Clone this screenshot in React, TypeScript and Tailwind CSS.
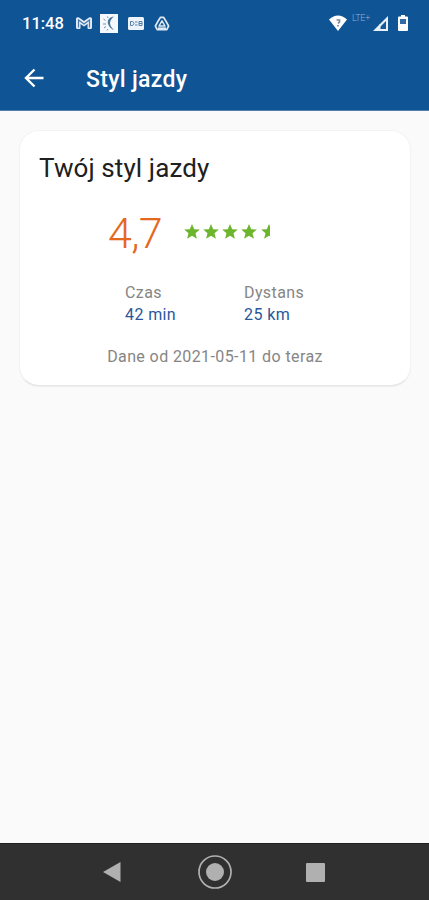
import type { ReactNode } from "react";

const STAR = "M8 0l2.200 5.200 5.600.4-4.300 3.600 1.400 5.500L8 11.700l-4.900 3 1.400-5.500L.2 5.600l5.600-.4z";

function Star({ half = false }: { half?: boolean }) {
  return (
    <svg viewBox={half ? "0 0 9 16" : "0 0 16 16"} className={half ? "h-4 w-[9px]" : "h-4 w-4"}>
      <path d={STAR} fill="#6cb52d" />
    </svg>
  );
}

function StatusBar() {
  return (
    <div className="flex h-[46px] items-center pl-[22px] pr-[21px] text-white">
      <span className="mt-0.5 w-[54px] text-[16.500px] font-medium leading-none">11:48</span>
      <svg viewBox="0 0 16 12" className="h-3 w-4" fill="none">
        <path d="M0 1.500Q1-.5 3 .5l5 3.500 5-3.500q2-1 3 1v9q0 1.500-1.500 1.500h-2q-1 0-1-1V7L8 9.500 4.500 7v4q0 1-1 1h-2Q0 12 0 10.500z" fill="#e4edf6" />
        <path d="M2.500 10.500V3L8 7l5.500-4v7.500" stroke="#4c7bac" strokeWidth="1.200" />
      </svg>
      <svg viewBox="0 0 18 19" className="ml-2 h-[19px] w-[18px]">
        <path d="M0 0h18v19H0z" fill="#f5f8fc" />
        <path d="M14 2.500C7.500 3.500 7 8 8.500 11c1 2.500 3 4 5.500 5-3-3-4-5-4-7s1.500-4.500 4-6.500z" fill="#43759f" />
        <path d="M3.500 5l2 1.500M3 10h3M4 14l2-1.500M7.500 2.500l.5 1.500M7 16.500l1-1.500" stroke="#6c91b4" />
      </svg>
      <svg viewBox="0 0 16 13" className="ml-2.5 h-[13px] w-4">
        <rect width="16" height="13" rx="1.500" fill="#edf3f9" />
        <path d="M2.500 4.500h2.200l1.300 2-1.300 2H2.500zM7 5h2.500M7 8h2.500M11 4.500h3v4h-3zM11 6.500h3" fill="none" stroke="#517fac" />
      </svg>
      <svg viewBox="0 0 16 15" className="ml-2.5 h-[15px] w-4" fill="none" stroke="#dfe9f3">
        <path d="M6.500 1.300h3Q12 5 14.600 10l-1.800 3.600H3.200L1.400 10Q4 5 6.500 1.300z" strokeWidth="1.700" strokeLinejoin="round" />
        <path d="M8 4.800L5 10h6z" strokeWidth="1.500" strokeLinejoin="round" />
        <path d="M4 12.200h8" strokeWidth="1.700" />
      </svg>
      <div className="ml-auto flex items-center">
        <svg viewBox="0 0 18 16" className="mr-px h-4 w-[18px]">
          <path d="M0 4.500Q9-3.500 18 4.500L9 16z" fill="#fff" />
          <path d="M7.500 5h3v1.800L9 8.300M9 10v1.500" fill="none" stroke="#7e8a96" strokeWidth="1.700" />
        </svg>
        <span className="-mt-2.5 ml-1 w-[19px] text-[9px] font-light leading-none tracking-[-0.300px] text-[#8fb2d5]">LTE+</span>
        <svg viewBox="0 0 15 15" className="ml-0.5 mr-[10px] h-[15px] w-[15px]">
          <path d="M0 15L15 0v15z" fill="#e9f0f8" />
          <path d="M7 11l6-6v8H7z" fill="#155998" />
          <path d="M7 8v5" stroke="#e9f0f8" strokeWidth="1" />
        </svg>
        <svg viewBox="0 0 10 16" className="h-4 w-2.5">
          <path d="M3 0h4v1.500h2q1 0 1 1V15q0 1-1 1H1q-1 0-1-1V2.500q0-1 1-1h2z" fill="#fff" />
          <path d="M2 4h6v5H2z" fill="#326ba4" />
        </svg>
      </div>
    </div>
  );
}

function Stat({ label, children }: { label: string; children: ReactNode }) {
  return (
    <div className="w-[119px] text-[16px] leading-[22px] tracking-[0.400px]">
      <div className="text-[#858585]">{label}</div>
      <div className="text-[#295797]">{children}</div>
    </div>
  );
}

export default function App() {
  return (
    <div className="flex h-[900px] w-[429px] flex-col overflow-hidden bg-[#fafafa] font-['Roboto',sans-serif]">
      <header className="h-[111px] border-b border-[#547fab] bg-[#0f5495]">
        <StatusBar />
        <div className="flex h-16 items-center pl-6 text-white">
          <svg viewBox="0 0 20 20" className="h-5 w-5" fill="none" stroke="currentColor" strokeWidth="2.400">
            <path d="M19.500 10H2M10.500 1.500L2 10l8.500 8.500" />
          </svg>
          <h1 className="ml-[42px] mt-0.5 text-[23px] font-medium leading-none tracking-[0.300px]">Styl jazdy</h1>
        </div>
      </header>

      <main className="flex-1 pl-[19px] pr-[18px] pt-[19px]">
        <section className="h-[256px] rounded-[20px] border border-[#f3f3f3] border-b-[#e6e6e6] bg-white px-[19px] pt-[21px] shadow-[0_1px_1px_#eeeeee]">
          <h2 className="text-[26px] leading-8 tracking-[0.100px] text-[#202020]">Twój styl jazdy</h2>
          <div className="mt-[25px] flex h-12 items-center pl-[69px]">
            <span className="w-[75.500px] text-[43px] font-light leading-none tracking-[-0.700px] text-[#e46820]">4,7</span>
            <div className="-mt-0.5 flex gap-[3.300px]">
              <Star />
              <Star />
              <Star />
              <Star />
              <Star half />
            </div>
          </div>
          <div className="mt-[25px] flex pl-[86px]">
            <Stat label="Czas">42 min</Stat>
            <Stat label="Dystans">25 km</Stat>
          </div>
          <p className="mt-5 text-center text-[16px] leading-[22px] tracking-[0.400px] text-[#858585]">Dane od 2021-05-11 do teraz</p>
        </section>
      </main>

      <nav className="flex h-[57px] items-center border-t border-[#202020] bg-[#303030] pl-[103px]">
        <svg viewBox="0 0 18 20" className="h-5 w-[18px]">
          <path d="M0 10L17.500 0v20z" fill="#b0b0b0" />
        </svg>
        <svg viewBox="0 0 34 34" className="ml-[77px] h-[34px] w-[34px]">
          <circle cx="17" cy="17" r="16" fill="none" stroke="#b0b0b0" strokeWidth="1.700" />
          <circle cx="17" cy="17" r="9" fill="#b0b0b0" />
        </svg>
        <div className="ml-[74px] h-[19px] w-[19px] rounded-[1px] bg-[#b0b0b0]" />
      </nav>
    </div>
  );
}
